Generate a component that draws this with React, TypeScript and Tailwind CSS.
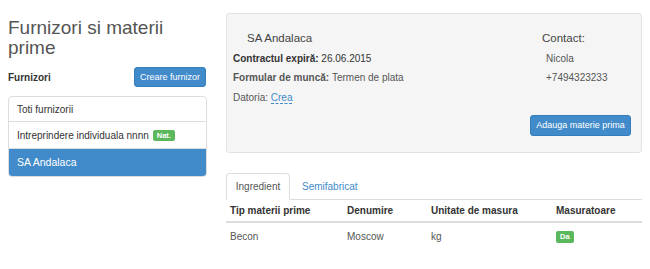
import React from "react";

export default function App() {
  return (
    <div className="flex w-[650px] h-[269px] bg-white px-2 gap-[19px] text-[10px] text-[#333] font-['Liberation_Sans',Arial,sans-serif] overflow-hidden">
      {/* Left column */}
      <div className="w-[199px] shrink-0">
        <h1 className="mt-[18px] text-[19px] leading-[20px] text-[#555] font-normal">
          Furnizori si materii prime
        </h1>
        <div className="mt-[9px] flex items-center justify-between h-[20px]">
          <span className="font-bold text-[10px] text-[#333]">Furnizori</span>
          <button className="mr-px h-[20px] w-[72px] rounded-[3px] bg-[#428bca] border border-[#357ebd] text-white text-[9px] leading-none">
            Creare furnizor
          </button>
        </div>
        <div className="mt-[9px] border border-[#ddd] rounded-[4px] overflow-hidden">
          <div className="h-[25px] flex items-center px-[8px] border-b border-[#ddd]">Toti furnizorii</div>
          <div className="h-[27px] flex items-center px-[8px] border-b border-[#ddd]">
            Intreprindere individuala nnnn
            <span className="ml-[4px] h-[11px] px-[4px] rounded-[2px] bg-[#5cb85c] text-white text-[7.5px] font-bold leading-[11px]">
              Nat.
            </span>
          </div>
          <div className="h-[27px] flex items-center px-[8px] bg-[#428bca] text-white text-[10.5px]">SA Andalaca</div>
        </div>
      </div>

      {/* Right column */}
      <div className="w-[416px] shrink-0">
        <div className="mt-[13px] h-[140px] bg-[#f5f5f5] border border-[#e3e3e3] rounded-[3px] flex pl-[6px] pr-[10px]">
          <div className="flex-1 pt-[16px]">
            <div className="pl-[14px] h-[18px] flex items-center text-[11.5px] text-[#444] font-medium">SA Andalaca</div>
            <div className="mt-px h-[19px] flex items-center text-[#333]">
              <b>Contractul expiră:</b>&nbsp;26.06.2015
            </div>
            <div className="h-[19px] flex items-center text-[#555]">
              <b>Formular de muncă:</b>&nbsp;Termen de plata
            </div>
            <div className="mt-px h-[19px] flex items-center text-[#555]">
              Datoria:&nbsp;
              <span className="text-[#428bca] border-b border-dashed border-[#428bca] leading-[11px]">Crea</span>
            </div>
          </div>
          <div className="w-[94px] pt-[16px] flex flex-col">
            <div className="h-[18px] flex items-center pl-[5px] text-[11.5px] text-[#444] font-medium">Contact:</div>
            <div className="mt-px h-[19px] flex items-center pl-[9px] text-[#555]">Nicola</div>
            <div className="h-[19px] flex items-center pl-[9px] text-[#555]">+7494323233</div>
            <button className="mt-[28px] h-[21px] w-[101px] -ml-[7px] rounded-[3px] bg-[#428bca] border border-[#357ebd] text-white text-[9px] leading-none">
              Adauga materie prima
            </button>
          </div>
        </div>

        {/* Tabs */}
        <div className="mt-[20px] flex border-b border-[#ddd] h-[27px]">
          <div className="-mb-px h-[27px] w-[64px] flex items-center justify-center bg-white border border-[#ddd] border-b-white rounded-t-[4px] text-[#555]">
            Ingredient
          </div>
          <div className="h-[26px] px-[12px] flex items-center text-[#428bca]">Semifabricat</div>
        </div>

        {/* Table */}
        <div className="grid grid-cols-[116px_84px_125px_91px]">
          <div className="h-[23px] flex items-center pl-[4px] font-bold border-b-2 border-[#ddd]">Tip materii prime</div>
          <div className="h-[23px] flex items-center pl-[5px] font-bold border-b-2 border-[#ddd]">Denumire</div>
          <div className="h-[23px] flex items-center pl-[5px] font-bold border-b-2 border-[#ddd]">Unitate de masura</div>
          <div className="h-[23px] flex items-center pl-[5px] font-bold border-b-2 border-[#ddd]">Masuratoare</div>
          <div className="h-[27px] flex items-center pl-[4px] text-[#555]">Becon</div>
          <div className="h-[27px] flex items-center pl-[5px] text-[#555]">Moscow</div>
          <div className="h-[27px] flex items-center pl-[5px] text-[#555]">kg</div>
          <div className="h-[27px] flex items-center pl-[5px]">
            <span className="h-[12px] px-[4px] rounded-[2px] bg-[#5cb85c] text-white text-[7.5px] font-bold leading-[12px]">Da</span>
          </div>
        </div>
      </div>
    </div>
  );
}
